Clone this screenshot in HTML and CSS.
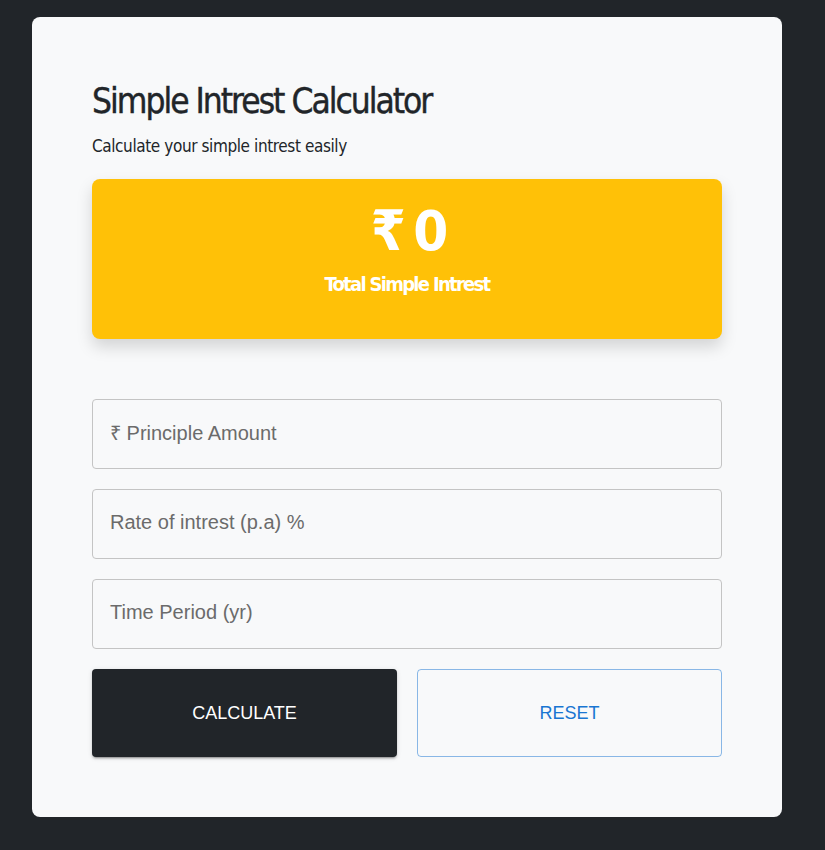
FILE: index.html
```html
<!DOCTYPE html>
<html>
<head>
<meta charset="utf-8">
<link rel="stylesheet" href="styles.css">
</head>
<body>
<div class="card">
  <h1 class="title">Simple Intrest Calculator</h1>
  <p class="subtitle">Calculate your simple intrest easily</p>
  <div class="result">
    <div class="amount">₹ 0</div>
    <div class="label">Total Simple Intrest</div>
  </div>
  <form class="form">
    <div class="field">₹ Principle Amount</div>
    <div class="field">Rate of intrest (p.a) %</div>
    <div class="field">Time Period (yr)</div>
    <div class="buttons">
      <button type="button" class="btn btn-dark">CALCULATE</button>
      <button type="button" class="btn btn-outline">RESET</button>
    </div>
  </form>
</div>
</body>
</html>
```
FILE: styles.css
```css
html, body {
  margin: 0;
  padding: 0;
  background: #212529;
}
body {
  padding: 17px 32px;
  font-family: "Liberation Sans", Arial, sans-serif;
}
.card {
  width: 750px;
  height: 800px;
  box-sizing: border-box;
  background: #f8f9fa;
  border-radius: 8px;
  padding: 60px 60px 0;
}
.title,
.subtitle,
.amount,
.label {
  font-family: "DejaVu Sans", sans-serif;
  font-stretch: condensed;
}
.title {
  margin: 0;
  font-size: 35px;
  font-weight: 400;
  line-height: 48px;
  color: #212529;
  letter-spacing: -2px;
  -webkit-text-stroke: 0.4px #212529;
}
.subtitle {
  margin: 9px 0 21px;
  font-size: 17px;
  line-height: 24px;
  color: #212529;
  letter-spacing: -0.4px;
}
.result {
  height: 160px;
  background: #ffc107;
  border-radius: 8px;
  box-shadow: 0 8px 16px rgba(0,0,0,0.15);
  color: #fff;
  text-align: center;
  box-sizing: border-box;
  padding-top: 24px;
}
.amount {
  font-size: 56px;
  font-weight: 700;
  line-height: 56px;
  letter-spacing: -5px;
}
.label {
  margin-top: 12px;
  font-size: 20px;
  font-weight: 700;
  line-height: 26px;
  letter-spacing: -1.7px;
}
.form {
  margin-top: 60px;
  display: flex;
  flex-direction: column;
  gap: 20px;
}
.field {
  height: 70px;
  box-sizing: border-box;
  border: 1px solid #c4c4c4;
  border-radius: 4px;
  padding: 0 17px 3px;
  display: flex;
  align-items: center;
  font-size: 20px;
  color: #6b6b6b;
}
.buttons {
  display: grid;
  grid-template-columns: 1fr 1fr;
  gap: 20px;
}
.btn {
  height: 88px;
  border-radius: 4px;
  font-family: "Liberation Sans", Arial, sans-serif;
  font-size: 18px;
  letter-spacing: 0;
  cursor: pointer;
}
.btn-dark {
  background: #212529;
  color: #fff;
  border: none;
  box-shadow: 0 3px 1px -2px rgba(0,0,0,0.2), 0 2px 2px 0 rgba(0,0,0,0.14), 0 1px 5px 0 rgba(0,0,0,0.12);
}
.btn-outline {
  background: transparent;
  color: #1976d2;
  border: 1px solid rgba(25,118,210,0.5);
}
```
